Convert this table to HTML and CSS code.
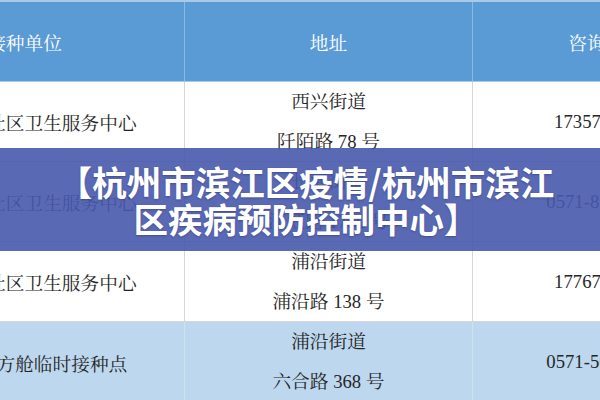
FILE: index.html
```html
<!DOCTYPE html>
<html lang="zh">
<head>
<meta charset="utf-8">
<link rel="stylesheet" href="styles.css">
</head>
<body>
<div class="page">
  <div class="table">
    <div class="cell head c1">接种单位</div>
    <div class="cell head c2">地址</div>
    <div class="cell head c3">咨询电话</div>

    <div class="cell c1">西兴街道社区卫生服务中心</div>
    <div class="cell c2"><span>西兴街道</span><span>阡陌路 78 号</span></div>
    <div class="cell c3">17357193412</div>

    <div class="cell c1">长河街道社区卫生服务中心</div>
    <div class="cell c2"><span>长河街道</span><span>江虹路 1750 号</span></div>
    <div class="cell c3">0571-87702305</div>

    <div class="cell c1">浦沿街道社区卫生服务中心</div>
    <div class="cell c2"><span>浦沿街道</span><span>浦沿路 138 号</span></div>
    <div class="cell c3">17767183066</div>

    <div class="cell alt c1">浦沿街道方舱临时接种点</div>
    <div class="cell alt c2"><span>浦沿街道</span><span>六合路 368 号</span></div>
    <div class="cell alt c3">0571-56627302</div>
  </div>
  <div class="banner">
    <div class="title">【杭州市滨江区疫情/杭州市滨江<br>区疾病预防控制中心】</div>
  </div>
</div>
</body>
</html>
```

FILE: styles.css
```css
html, body {
  margin: 0;
  padding: 0;
}
body {
  width: 600px;
  height: 400px;
  overflow: hidden;
  background: #ffffff;
  font-family: "Liberation Serif", "Noto Serif CJK SC", "Noto Sans CJK SC", serif;
}
.page {
  position: relative;
  width: 600px;
  height: 400px;
  overflow: hidden;
}
.table {
  display: grid;
  grid-template-columns: 320px 288px 266px;
  grid-template-rows: 80px 80px 80px 80px 80px;
  margin-left: -135px;
  width: 874px;
  border-top: 2px solid #a9c9ea;
  box-sizing: border-box;
}
.cell {
  display: flex;
  flex-direction: column;
  align-items: center;
  justify-content: center;
  font-size: 18.7px;
  color: #262626;
  border-right: 1px solid #d6d6d6;
  border-bottom: 1px solid #d6d6d6;
  background: #ffffff;
  white-space: nowrap;
}
.cell.c2 span {
  display: block;
  line-height: 40px;
}
.cell.head {
  background: #5b9bd5;
  color: #ffffff;
  border-right: 1px solid #8cb9e4;
  border-bottom: 1px solid #a7c9ea;
}
.cell.alt {
  background: #bdd7ee;
  border-right: 1px solid #d3e1ef;
  border-bottom: none;
}
.banner {
  position: absolute;
  left: 0;
  top: 148px;
  width: 600px;
  height: 103px;
  background: rgba(72, 89, 172, 0.9);
  display: flex;
  align-items: center;
  justify-content: center;
}
.title {
  font-family: "Noto Sans CJK SC", sans-serif;
  font-weight: 700;
  font-size: 34.5px;
  line-height: 37px;
  color: #ffffff;
  text-align: center;
  padding-left: 12px;
  text-shadow: 0 1px 2px rgba(30, 40, 90, 0.4);
}
```
